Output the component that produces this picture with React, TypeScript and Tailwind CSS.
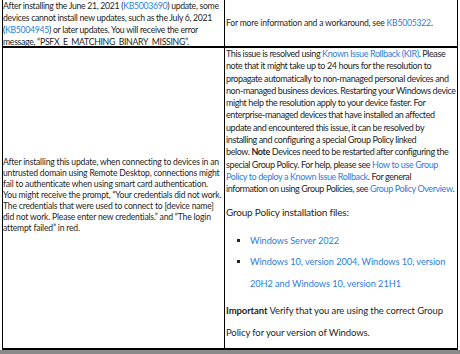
const link = "text-[#2a7de1]";

export default function App() {
  return (
    <div className="w-[460px] h-[354px] bg-white overflow-hidden text-[#262626] font-['Lato',sans-serif] whitespace-nowrap">
      <div className="ml-[2px] w-[456px] h-[350px] border-l border-r border-b-2 border-black flex flex-col">
        {/* row 1 */}
        <div className="grid grid-cols-[222px_minmax(0,1fr)] h-[48px] border-b-2 border-black">
          <div className="border-r border-black overflow-hidden text-[8.7px] leading-[12px] tracking-[-0.3px]">
            After installing the June 21, 2021 (<span className={link}>KB5003690</span>) update, some
            <br />
            devices cannot install new updates, such as the July 6, 2021
            <br />(<span className={link}>KB5004945</span>) or later updates. You will receive the error
            <br />
            message, “PSFX_E_MATCHING_BINARY_MISSING”.
          </div>
          <div className="flex items-center pl-[1px] pt-[1px] overflow-hidden text-[8.6px] tracking-[-0.2px]">
            <p>
              For more information and a workaround, see <span className={link}>KB5005322</span>.
            </p>
          </div>
        </div>
        {/* row 2 */}
        <div className="grid grid-cols-[222px_minmax(0,1fr)] flex-1">
          <div className="border-r border-black overflow-hidden flex items-center pb-[6px] text-[8.6px] leading-[11px] tracking-[-0.2px]">
            <p>
              After installing this update, when connecting to devices in an
              <br />
              untrusted domain using Remote Desktop, connections might
              <br />
              fail to authenticate when using smart card authentication.
              <br />
              You might receive the prompt, “Your credentials did not work.
              <br />
              The credentials that were used to connect to [device name]
              <br />
              did not work. Please enter new credentials.” and “The login
              <br />
              attempt failed” in red.
            </p>
          </div>
          <div className="pl-[1px] overflow-hidden text-[9px] tracking-[-0.4px]">
            <p className="leading-[12.3px]">
              This issue is resolved using <span className={link}>Known Issue Rollback (KIR)</span>. Please
              <br />
              note that it might take up to 24 hours for the resolution to
              <br />
              propagate automatically to non-managed personal devices and
              <br />
              non-managed business devices. Restarting your Windows device
              <br />
              might help the resolution apply to your device faster. For
              <br />
              enterprise-managed devices that have installed an affected
              <br />
              update and encountered this issue, it can be resolved by
              <br />
              installing and configuring a special Group Policy linked
              <br />
              below. <b>Note</b> Devices need to be restarted after configuring the
              <br />
              special Group Policy. For help, please see{" "}
              <span className={link}>How to use Group</span>
              <br />
              <span className={link}>Policy to deploy a Known Issue Rollback</span>. For general
              <br />
              information on using Group Policies, see{" "}
              <span className={link}>Group Policy Overview</span>.
            </p>
            <p className="mt-[8px] text-[10px] leading-[16px] tracking-[-0.2px]">
              Group Policy installation files:
            </p>
            <ul className="mt-[10px] pl-[24px] text-[9.2px] leading-[21.5px] tracking-[-0.05px] list-[square] marker:text-[#262626]">
              <li>
                <span className={link}>Windows Server 2022</span>
              </li>
              <li>
                <span className={link}>
                  Windows 10, version 2004, Windows 10, version
                  <br />
                  20H2 and Windows 10, version 21H1
                </span>
              </li>
            </ul>
            <p className="mt-[6px] text-[9.5px] leading-[22px] tracking-[-0.1px]">
              <b>Important</b> Verify that you are using the correct Group
              <br />
              Policy for your version of Windows.
            </p>
          </div>
        </div>
      </div>
      <div className="h-[4px] bg-[#8a8a8a]" />
    </div>
  );
}
